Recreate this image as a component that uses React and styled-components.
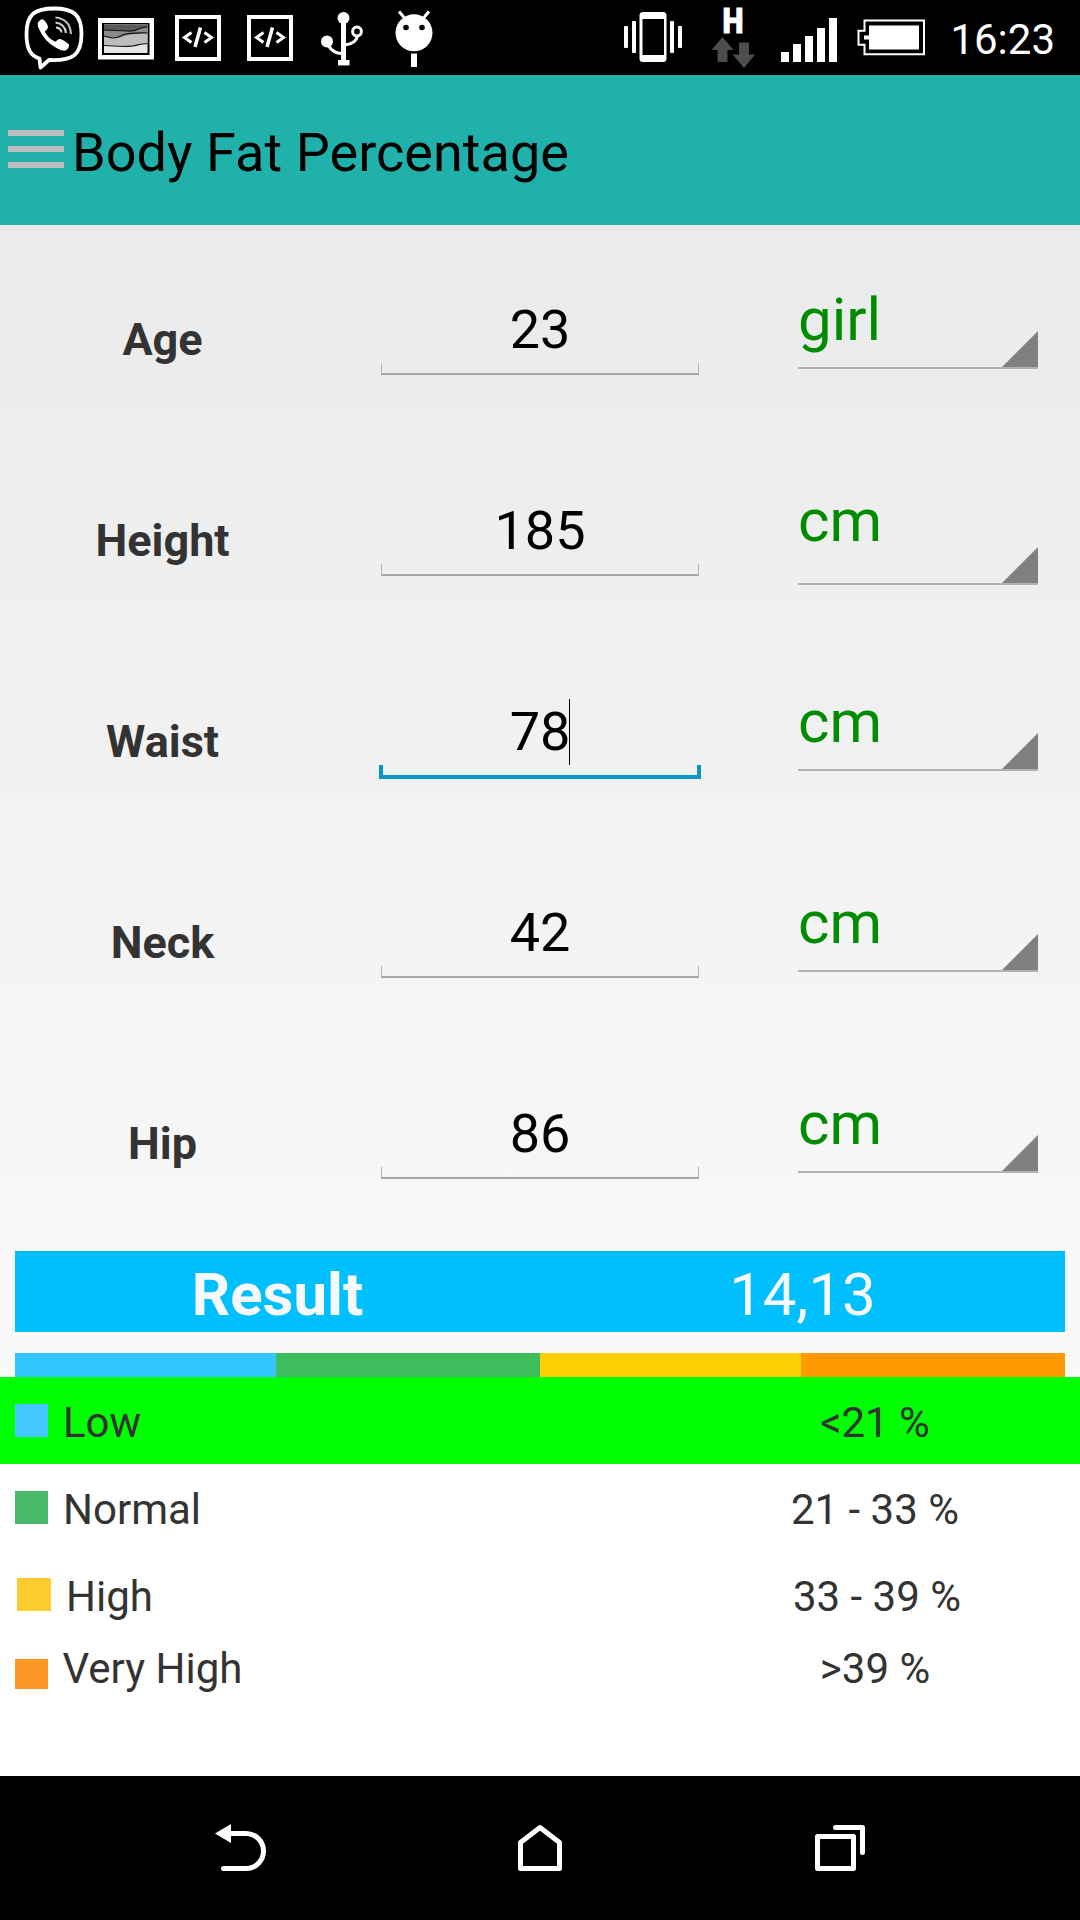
import React from "react";
import styled, { createGlobalStyle } from "styled-components";

const GlobalStyle = createGlobalStyle`
  html, body { margin: 0; padding: 0; background: #000; }
  * { box-sizing: border-box; }
`;

const Screen = styled.div`
  width: 1080px;
  height: 1920px;
  display: flex;
  flex-direction: column;
  overflow: hidden;
  background: #fff;
  font-family: Roboto, "Liberation Sans", sans-serif;
`;

/* ---------- status bar ---------- */

const StatusBar = styled.header`
  display: flex;
  flex: none;
  height: 75px;
  padding: 0 25px 0 24px;
  justify-content: space-between;
  background: #000;
  color: #fff;
`;

const StatusGroup = styled.div`
  display: flex;
  align-items: center;
`;

const StatusIcon = styled.svg`
  display: block;
  flex: none;
  width: ${(p) => p.$w}px;
  height: 75px;
  margin-left: ${(p) => p.$gap || 0}px;
  overflow: visible;
`;

const Clock = styled.time`
  margin-left: 25px;
  padding-top: 4px;
  font-size: 42px;
  line-height: 49px;
`;

const ViberIcon = () => (
  <StatusIcon $w={60} viewBox="24 0 60 75" fill="none" stroke="#fff">
    <path
      d="M54 8.5C35 8.5 26.5 14 26.5 34C26.5 49 30.500 56 39.500 58.500L40.500 67.500L49 60C73 61 81.500 55 81.500 34C81.500 14 73 8.500 54 8.500Z"
      strokeWidth="3.800"
      strokeLinejoin="round"
    />
    <path
      d="M38 22.500Q40.500 18.500 43.500 19.500Q47.500 23.500 48 27Q48 29.500 44.800 31.500Q48 38.500 55.500 41.800Q58 38.500 60.500 39Q66 41 69 44.500Q69.500 48 65.500 50.500Q62 51.500 56 47.800Q44.500 41.500 39.500 30Q37 25.500 38 22.500Z"
      fill="#fff"
      stroke="none"
    />
    <path d="M55.500 17.500Q70 19 71 34" stroke="#bbb" strokeWidth="2.200" />
    <path d="M55.500 22.500Q65 24 66 33" stroke="#ccc" strokeWidth="2.200" />
    <path d="M56 27.500Q61 28 61.500 32.500" stroke="#ddd" strokeWidth="2" />
  </StatusIcon>
);

const PictureIcon = () => (
  <StatusIcon $w={56} $gap={14} viewBox="98 0 56 75">
    <path d="M98 18H154V59.500H98Z" fill="#fff" />
    <path d="M102 23H149.500V55H102Z" fill="#000" />
    <path d="M104 24.500H147.500V53H104Z" fill="#e6e6e6" />
    <path d="M104 24.500H147.500V43.500Q141 43 134 46Q123 47 118 45.500L104 45Z" fill="#bdbdbd" />
    <path d="M104 24.500H147.500V33L136 34Q128 34 120 37.500Q113 39 104 37Z" fill="#8a8a8a" />
    <path d="M104 24.500H147.500V27L141 28Q135 31.500 128 31L104 30Z" fill="#5a5a5a" />
    <path
      d="M104 30L128 31Q135 31.500 141 28L147.500 27M104 36L112 38Q118 38 124 34.500Q130 32.500 147.500 33M104 45.500L124 46.500Q134 46.500 139 44.500L147.500 43.500"
      fill="none"
      stroke="#111"
      strokeWidth="1.200"
    />
  </StatusIcon>
);

const CodeIcon = ({ gap }) => (
  <StatusIcon $w={46} $gap={gap} viewBox="175 0 46 75" fill="none" stroke="#fff">
    <rect x="177" y="17" width="42" height="42" strokeWidth="4" />
    <path d="M191.500 32.500L184.500 37.500L191.500 42.500M204.500 32.500L211.500 37.500L204.500 42.500" strokeWidth="3" />
    <path d="M200.500 27.500L195 47" strokeWidth="3.500" />
  </StatusIcon>
);

const UsbIcon = () => (
  <StatusIcon $w={42} $gap={28} viewBox="321 0 42 75" fill="none" stroke="#fff">
    <circle cx="343.500" cy="18" r="6" fill="#fff" stroke="none" />
    <circle cx="327" cy="41.500" r="6" fill="#fff" stroke="none" />
    <circle cx="357" cy="31.500" r="4.400" strokeWidth="3" />
    <path d="M343.500 20V62" strokeWidth="5" />
    <path d="M338 62.700H349.500" strokeWidth="5.500" />
    <path d="M328 45Q333 53.500 342 53.500" strokeWidth="3.200" />
    <path d="M345 45Q356 43.500 357.500 36" strokeWidth="3.200" />
  </StatusIcon>
);

const AndroidIcon = () => (
  <StatusIcon $w={38} $gap={32} viewBox="395 0 38 75">
    <path d="M399 11.500L404.500 18M429 11.500L423.500 18" stroke="#fff" strokeWidth="3" strokeLinecap="butt" />
    <circle cx="414" cy="32.800" r="18.500" fill="#fff" />
    <circle cx="406" cy="27.500" r="2.800" fill="#000" />
    <circle cx="422" cy="27.500" r="2.800" fill="#000" />
    <rect x="411" y="53.500" width="6" height="13.500" fill="#fff" />
  </StatusIcon>
);

const VibrateIcon = () => (
  <StatusIcon $w={58} viewBox="624 0 58 75" fill="#fff">
    <rect x="624" y="26" width="4" height="22" rx="1" />
    <rect x="632" y="21" width="4" height="32" rx="1" />
    <path
      fillRule="evenodd"
      d="M643 12H663Q666.500 12 666.500 15.500V58.500Q666.500 62 663 62H643Q639.500 62 639.500 58.500V15.500Q639.500 12 643 12ZM642.500 19V55H664V19Z"
    />
    <rect x="670" y="21" width="4" height="32" rx="1" />
    <rect x="678" y="26" width="4" height="22" rx="1" />
  </StatusIcon>
);

const DataIcon = () => (
  <StatusIcon $w={44} $gap={29} viewBox="711 0 44 75">
    <text
      x="722.500"
      y="33.300"
      fill="#fff"
      stroke="#fff"
      strokeWidth="1"
      fontFamily="Roboto, sans-serif"
      fontWeight="900"
      fontSize="35.500"
      textLength="21"
      lengthAdjust="spacingAndGlyphs"
    >
      H
    </text>
    <path d="M722.500 37L733.500 50H727.500V62H717.500V50H711.500Z" fill="#4d4d4d" />
    <path d="M739 42.500H749V54.500H755L744 68L732.500 54.500H739Z" fill="#4d4d4d" />
  </StatusIcon>
);

const SignalIcon = () => (
  <StatusIcon $w={56} $gap={26} viewBox="781 0 56 75" fill="#fff">
    <rect x="781" y="52" width="8" height="10" />
    <rect x="793" y="44" width="8" height="18" />
    <rect x="805" y="36" width="8" height="26" />
    <rect x="817" y="28" width="8" height="34" />
    <rect x="829" y="18" width="8" height="44" />
  </StatusIcon>
);

const BatteryIcon = () => (
  <StatusIcon $w={68} $gap={20} viewBox="857 0 68 75">
    <path
      d="M864.500 20.500H924V54.200H864.500V44.700H858.500V30.700H864.500Z"
      fill="none"
      stroke="#fff"
      strokeWidth="2"
    />
    <path d="M869 25.500H919V49.500H869V39.500H864V35.500H869Z" fill="#fff" />
  </StatusIcon>
);

/* ---------- title bar ---------- */

const TitleBar = styled.div`
  display: flex;
  flex: none;
  align-items: center;
  height: 150px;
  padding-left: 8px;
  background: #20b2aa;
`;

const Burger = styled.div`
  display: flex;
  flex-direction: column;
  gap: 10px;
  width: 56px;
  margin: 0 8px 2px 0;
`;

const BurgerLine = styled.span`
  height: 6px;
  background: #bdbdbd;
`;

const Title = styled.h1`
  margin: 0;
  padding-top: 5px;
  font-size: 54px;
  line-height: 63px;
  font-weight: 400;
  letter-spacing: 0.05px;
  color: #000;
`;

/* ---------- form ---------- */

const Content = styled.main`
  display: flex;
  flex: none;
  flex-direction: column;
  height: 1152px;
  padding-top: 14px;
  background: linear-gradient(to bottom, #e8e8e8 -173px, #fafafa 1207px);
`;

const FormRow = styled.div`
  display: grid;
  grid-template-columns: 324px 432px 240px;
  align-items: start;
  height: 201px;
`;

const RowLabel = styled.div`
  padding: 74px 0 0 1px;
  text-align: center;
  font-size: 45px;
  line-height: 53px;
  font-weight: 700;
  color: #333;
`;

const Field = styled.div`
  display: flex;
  flex-direction: column;
  align-items: center;
  padding-top: 58px;
`;

const FieldValue = styled.span`
  position: relative;
  padding-bottom: 1px;
  font-size: 54px;
  line-height: 65px;
  color: #000;
`;

const Caret = styled.span`
  position: absolute;
  top: 0;
  left: calc(100% - 1px);
  width: 1px;
  height: 66px;
  background: #000;
`;

const Bracket = styled.div`
  width: ${(p) => (p.$focused ? 322 : 318)}px;
  height: ${(p) => (p.$focused ? 14 : 12)}px;
  border: solid ${(p) => (p.$focused ? "#0a97c5" : "#b5b5b5")};
  border-width: ${(p) => (p.$focused ? "0 4px 4px" : "0 1px 2px")};
  border-bottom-color: ${(p) => (p.$focused ? "#0a97c5" : "#a6a6a6")};
`;

const Spinner = styled.div`
  display: flex;
  flex-direction: column;
  justify-content: space-between;
  width: 240px;
  height: ${(p) => (p.$tall ? 145 : 130)}px;
  margin-left: 42px;
  padding-top: 45px;
  border-bottom: 2px solid #b2b2b2;
`;

const SpinnerText = styled.span`
  height: 36px;
  font-size: 60px;
  line-height: 71px;
  color: #008b00;
`;

const SpinnerCorner = styled.span`
  align-self: flex-end;
  width: 36px;
  height: 36px;
  background: #808080;
  clip-path: polygon(100% 0, 100% 100%, 0 100%);
`;

/* ---------- result ---------- */

const ResultBar = styled.section`
  display: grid;
  grid-template-columns: 1fr 1fr;
  align-items: center;
  height: 81px;
  margin: 7px 15px 0;
  padding-top: 6px;
  text-align: center;
  font-size: 60px;
  line-height: 71px;
  color: #f8f8ff;
  background: #00bfff;
`;

const ResultLabel = styled.span`
  font-weight: 700;
`;

const ResultValue = styled.span`
  font-weight: 400;
`;

const Scale = styled.div`
  display: grid;
  grid-template-columns: 261px 264px 261px 264px;
  height: 24px;
  margin: 21px 15px 0;
`;

const ScalePart = styled.span`
  background: ${(p) => p.$color};
`;

/* ---------- legend ---------- */

const Legend = styled.section`
  flex: 1;
  background: #fff;
`;

const LegendRow = styled.div`
  display: flex;
  align-items: center;
  height: ${(p) => (p.$compact ? 57 : 87)}px;
  padding-left: ${(p) => 15 + (p.$shift || 0)}px;
  background: ${(p) => (p.$active ? "#00ff00" : "transparent")};
`;

const Swatch = styled.span`
  flex: none;
  width: ${(p) => (p.$shift ? 34 : 33)}px;
  height: ${(p) => (p.$compact ? 30 : 33)}px;
  margin-top: ${(p) => (p.$compact ? 15 : 0)}px;
  background: ${(p) => p.$color};
`;

const LegendText = styled.span`
  flex: 1;
  padding: 4px 0 0 ${(p) => (p.$compact ? 14.500 : 15)}px;
  font-size: 42px;
  line-height: 49px;
  color: #333;
`;

const LegendRange = styled.span`
  flex: none;
  width: 410px;
  margin-right: ${(p) => -(p.$shift || 0)}px;
  padding-top: 4px;
  text-align: center;
  font-size: 42px;
  line-height: 49px;
  color: #333;
`;

/* ---------- navigation ---------- */

const NavBar = styled.nav`
  display: flex;
  flex: none;
  justify-content: center;
  height: 144px;
  background: #000;
`;

const NavButton = styled.button`
  display: flex;
  align-items: center;
  justify-content: center;
  width: 300px;
  padding: 0;
  border: 0;
  background: none;
`;

const NavIcon = styled.svg`
  display: block;
  width: 60px;
  height: 144px;
  fill: none;
  stroke: #fff;
  stroke-width: 5;
  stroke-linecap: round;
  stroke-linejoin: round;
`;

const rows = [
  { label: "Age", value: "23", unit: "girl" },
  { label: "Height", value: "185", unit: "cm", tall: true },
  { label: "Waist", value: "78", unit: "cm", focused: true },
  { label: "Neck", value: "42", unit: "cm" },
  { label: "Hip", value: "86", unit: "cm" },
];

const scaleColors = ["#33c5ff", "#3dbd5e", "#fbcf00", "#ff9900"];

const levels = [
  { name: "Low", range: "<21 %", color: "#44c8ff", active: true },
  { name: "Normal", range: "21 - 33 %", color: "#4bb96a" },
  { name: "High", range: "33 - 39 %", color: "#fbcb30", shift: 2 },
  { name: "Very High", range: ">39 %", color: "#fd9827", compact: true },
];

export default function App() {
  return (
    <Screen>
      <GlobalStyle />
      <StatusBar>
        <StatusGroup>
          <ViberIcon />
          <PictureIcon />
          <CodeIcon gap={21} />
          <CodeIcon gap={26} />
          <UsbIcon />
          <AndroidIcon />
        </StatusGroup>
        <StatusGroup>
          <VibrateIcon />
          <DataIcon />
          <SignalIcon />
          <BatteryIcon />
          <Clock>16:23</Clock>
        </StatusGroup>
      </StatusBar>

      <TitleBar>
        <Burger>
          <BurgerLine />
          <BurgerLine />
          <BurgerLine />
        </Burger>
        <Title>Body Fat Percentage</Title>
      </TitleBar>

      <Content>
        {rows.map((row) => (
          <FormRow key={row.label}>
            <RowLabel>{row.label}</RowLabel>
            <Field>
              <FieldValue>
                {row.value}
                {row.focused && <Caret />}
              </FieldValue>
              <Bracket $focused={row.focused} />
            </Field>
            <Spinner $tall={row.tall}>
              <SpinnerText>{row.unit}</SpinnerText>
              <SpinnerCorner />
            </Spinner>
          </FormRow>
        ))}
        <ResultBar>
          <ResultLabel>Result</ResultLabel>
          <ResultValue>14,13</ResultValue>
        </ResultBar>
        <Scale>
          {scaleColors.map((color) => (
            <ScalePart key={color} $color={color} />
          ))}
        </Scale>
      </Content>

      <Legend>
        {levels.map((level) => (
          <LegendRow
            key={level.name}
            $active={level.active}
            $compact={level.compact}
            $shift={level.shift}
          >
            <Swatch $color={level.color} $compact={level.compact} $shift={level.shift} />
            <LegendText $compact={level.compact}>{level.name}</LegendText>
            <LegendRange $shift={level.shift}>{level.range}</LegendRange>
          </LegendRow>
        ))}
      </Legend>

      <NavBar>
        <NavButton aria-label="Back">
          <NavIcon viewBox="210 1776 60 144">
            <path d="M223.500 1868.500H246A17.500 17.500 0 0 0 246 1833.500H228" />
            <path d="M215 1833.500L231 1824V1843Z" fill="#fff" stroke="none" />
          </NavIcon>
        </NavButton>
        <NavButton aria-label="Home">
          <NavIcon viewBox="510 1776 60 144">
            <path d="M520.500 1868.500V1842.500L540 1827.500L559.500 1842.500V1868.500Z" />
          </NavIcon>
        </NavButton>
        <NavButton aria-label="Recent apps">
          <NavIcon viewBox="810 1776 60 144">
            <path d="M817.500 1836.500H853.500V1868.500H817.500ZM835.500 1827.500H862.500V1852.500" />
          </NavIcon>
        </NavButton>
      </NavBar>
    </Screen>
  );
}
